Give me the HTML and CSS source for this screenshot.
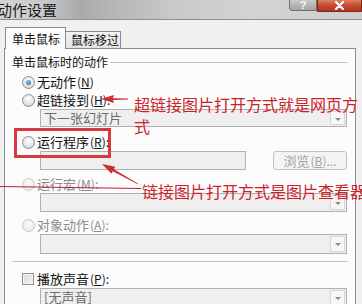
FILE: index.html
```html
<!DOCTYPE html>
<html lang="zh-CN">
<head>
<meta charset="utf-8">
<title>动作设置</title>
<link rel="stylesheet" href="styles.css">
</head>
<body>
<div class="win">
  <div class="titlebar">
    <span class="title">动作设置</span>
    <span class="tb-help">?</span>
    <span class="tb-close"><svg width="11" height="9" viewBox="0 0 11 9"><path d="M2 1 L9 8 M9 1 L2 8" stroke="#fff" stroke-width="2.2" stroke-linecap="round"/></svg></span>
  </div>
  <div class="content">
    <div class="tabs">
      <div class="tab active">单击鼠标</div>
      <div class="tab">鼠标移过</div>
    </div>
    <div class="panel">
      <div class="group-head"><span>单击鼠标时的动作</span><i class="rule"></i></div>
      <div class="row r1"><span class="rb on"></span><span class="lbl">无动作<span class="key">(<u>N</u>)</span></span></div>
      <div class="row r2"><span class="rb"></span><span class="lbl">超链接到<span class="key">(<u>H</u>):</span></span></div>
      <div class="dd dd1"><span class="dd-text">下一张幻灯片</span><span class="arr"></span></div>
      <div class="row r3"><span class="rb"></span><span class="lbl">运行程序<span class="key">(<u>R</u>):</span></span></div>
      <div class="inrow">
        <span class="field"></span>
        <span class="btn">浏览<span class="key">(<u>B</u>)...</span></span>
      </div>
      <div class="row r4 dis"><span class="rb"></span><span class="lbl">运行宏<span class="key">(<u>M</u>):</span></span></div>
      <div class="dd dd2"><span class="dd-text"></span><span class="arr"></span></div>
      <div class="row r5 dis"><span class="rb"></span><span class="lbl">对象动作<span class="key">(<u>A</u>):</span></span></div>
      <div class="dd dd3"><span class="dd-text"></span><span class="arr"></span></div>
      <div class="sep"></div>
      <div class="row r6"><span class="cb"></span><span class="lbl">播放声音<span class="key">(<u>P</u>):</span></span></div>
      <div class="dd dd4"><span class="dd-text">[无声音]</span><span class="arr"></span></div>
    </div>
  </div>

  <div class="redbox"></div>
  <svg class="marks" width="362" height="304" viewBox="0 0 362 304">
    <polygon points="101,99 114,95 113,98.2 128,98.5 128,99.5 113,100 114,103" fill="#d22a30"/>
    <polygon points="102,164 115.3,166.8 114,169.3 138.2,183.7 137.8,184.3 112.8,171.3 111.5,173.8" fill="#d22a30"/>
    <line x1="0" y1="186.5" x2="141" y2="188.5" stroke="#b3232a" stroke-width="1"/>
  </svg>
  <div class="note note1">超链接图片打开方式就是网页方式</div>
  <div class="note note2">链接图片打开方式是图片查看器</div>
</div>
</body>
</html>
```

FILE: styles.css
```css
html, body {
  margin: 0;
  padding: 0;
  background: #f0f0f0;
}

.win {
  position: relative;
  width: 362px;
  height: 304px;
  overflow: hidden;
  background: #f0f0f0;
  font-family: "Noto Sans CJK SC", "Noto Sans", sans-serif;
  color: #111;
}

/* title bar */
.titlebar {
  height: 19px;
  border-bottom: 1px solid #8f8f8f;
  display: flex;
  align-items: flex-start;
  background: linear-gradient(90deg, #d4d5d7 0%, #c8c9ca 12%, #a9aaab 22%, #b6b7b8 32%, #c9c9ca 48%, #d3d3d4 68%, #cfcfd0 100%);
}
.title {
  font-size: 15px;
  line-height: 19px;
  margin-left: -3px;
  color: #1c1c1c;
}
.tb-help {
  margin-left: auto;
  width: 28px;
  height: 11px;
  box-sizing: border-box;
  border: 1px solid #6e7174;
  border-top: 0;
  border-radius: 0 0 0 4px;
  background: linear-gradient(#c9c9c9, #a4a4a4);
  color: #f4f4f4;
  font-family: "Liberation Sans", sans-serif;
  font-weight: bold;
  font-size: 11px;
  line-height: 10px;
  text-align: center;
}
.tb-close {
  width: 45px;
  height: 12px;
  box-sizing: border-box;
  border: 1px solid #7b2a1b;
  border-top: 0;
  background: linear-gradient(#d98168, #c5462c 55%, #b3341e);
  display: flex;
  justify-content: center;
  align-items: center;
}

/* tabs */
.content {
  padding-top: 7px;
}
.tabs {
  display: flex;
  align-items: flex-end;
  height: 22px;
  margin-left: 5px;
  margin-bottom: -1px;
  position: relative;
  z-index: 1;
}
.tab {
  box-sizing: border-box;
  font-size: 12px;
  color: #111;
  border: 1px solid #898c95;
  height: 18px;
  line-height: 15px;
  width: 55px;
  padding-left: 5px;
  background: linear-gradient(#f3f3f3, #e2e2e2);
  white-space: nowrap;
}
.tab.active {
  width: 61px;
  height: 22px;
  line-height: 21px;
  padding-left: 6px;
  border-bottom: 0;
  background: #fcfcfc;
}
.tab + .tab {
  border-left: 0;
}

/* panel */
.panel {
  margin-left: 4px;
  width: 352px;
  height: 270px;
  box-sizing: border-box;
  border: 1px solid #898c95;
  background: #fcfcfc;
  padding-left: 7px;
  font-size: 13px;
}
.group-head {
  margin-top: 6px;
  height: 14px;
  display: flex;
  align-items: center;
  font-size: 12px;
  line-height: 14px;
}
.group-head .rule {
  flex: 1;
  height: 1px;
  background: #c3c3c3;
  margin: 1px 7px 0 2px;
}

.row {
  display: flex;
  align-items: center;
  height: 18px;
  margin-left: 10px;
  line-height: 18px;
  white-space: nowrap;
}
.row.dis {
  color: #8c8c8c;
}
.r1 { margin-top: 4px; }
.r3 { margin-top: 6px; }
.r4 { margin-top: 5px; }
.r5 { margin-top: 4px; }
.r6 { margin-top: 8px; }

.key {
  font-size: 12px;
  margin-left: 1px;
}

.rb {
  width: 13px;
  height: 13px;
  box-sizing: border-box;
  border-radius: 50%;
  border: 1px solid #8e8f8f;
  background: radial-gradient(circle at 50% 35%, #ffffff 0%, #eaeaea 45%, #c9c9c9 100%);
  margin-right: 2px;
  position: relative;
  flex: none;
}
.rb.on::after {
  content: "";
  position: absolute;
  left: 3px;
  top: 3px;
  width: 5px;
  height: 5px;
  border-radius: 50%;
  background: radial-gradient(circle at 40% 35%, #7ec0f4, #1d5ea8);
}
.dis .rb {
  border-color: #c9c9c9;
  background: radial-gradient(circle at 50% 35%, #fbfbfb, #e6e6e6);
}
.cb {
  width: 12px;
  height: 12px;
  box-sizing: border-box;
  border: 1px solid #8e8f8f;
  background: linear-gradient(135deg, #d5d5d5, #f6f6f6);
  box-shadow: inset 0 0 0 1px #f4f4f4;
  margin-right: 3px;
  flex: none;
}
.lbl u {
  text-decoration: underline;
}

/* dropdowns */
.dd {
  margin-left: 28px;
  width: 307px;
  height: 18px;
  box-sizing: border-box;
  border: 1px solid #aeb2b6;
  background: #efefef;
  display: flex;
  align-items: stretch;
  color: #6c6c6c;
  font-size: 13px;
  line-height: 16px;
}
.dd-text {
  padding-left: 3px;
  flex: 1;
}
.dd .arr {
  width: 15px;
  margin: 1px;
  box-sizing: border-box;
  border: 1px solid #d6d6d6;
  background: #f7f7f7;
  position: relative;
}
.dd .arr::after {
  content: "";
  position: absolute;
  left: 4px;
  top: 6px;
  border-left: 3px solid transparent;
  border-right: 3px solid transparent;
  border-top: 3px solid #8a8a8a;
}
.dd2 { height: 19px; }
.dd3 { height: 20px; }
.dd4 { height: 19px; }

/* program path row */
.inrow {
  margin-left: 28px;
  width: 307px;
  height: 19px;
  display: flex;
}
.field {
  width: 206px;
  box-sizing: border-box;
  border: 1px solid #aeb2b6;
  background: #efefef;
}
.btn {
  margin-left: auto;
  width: 74px;
  box-sizing: border-box;
  border: 1px solid #c2c2c2;
  border-radius: 3px;
  background: #f4f4f4;
  color: #a3a3a3;
  font-size: 13px;
  line-height: 17px;
  text-align: center;
  white-space: nowrap;
}

.sep {
  height: 1px;
  background: #c3c3c3;
  margin: 7px 7px 0 0;
}

/* annotations (overlay) */
.redbox {
  position: absolute;
  left: 14px;
  top: 128px;
  width: 97px;
  height: 30px;
  box-sizing: border-box;
  border: 3px solid #d7393e;
}
.marks {
  position: absolute;
  left: 0;
  top: 0;
}
.note {
  position: absolute;
  color: #cc2229;
  font-size: 16px;
  line-height: 22px;
}
.note1 {
  left: 134px;
  top: 93px;
  width: 228px;
}
.note2 {
  left: 142px;
  top: 180px;
  white-space: nowrap;
}
```
